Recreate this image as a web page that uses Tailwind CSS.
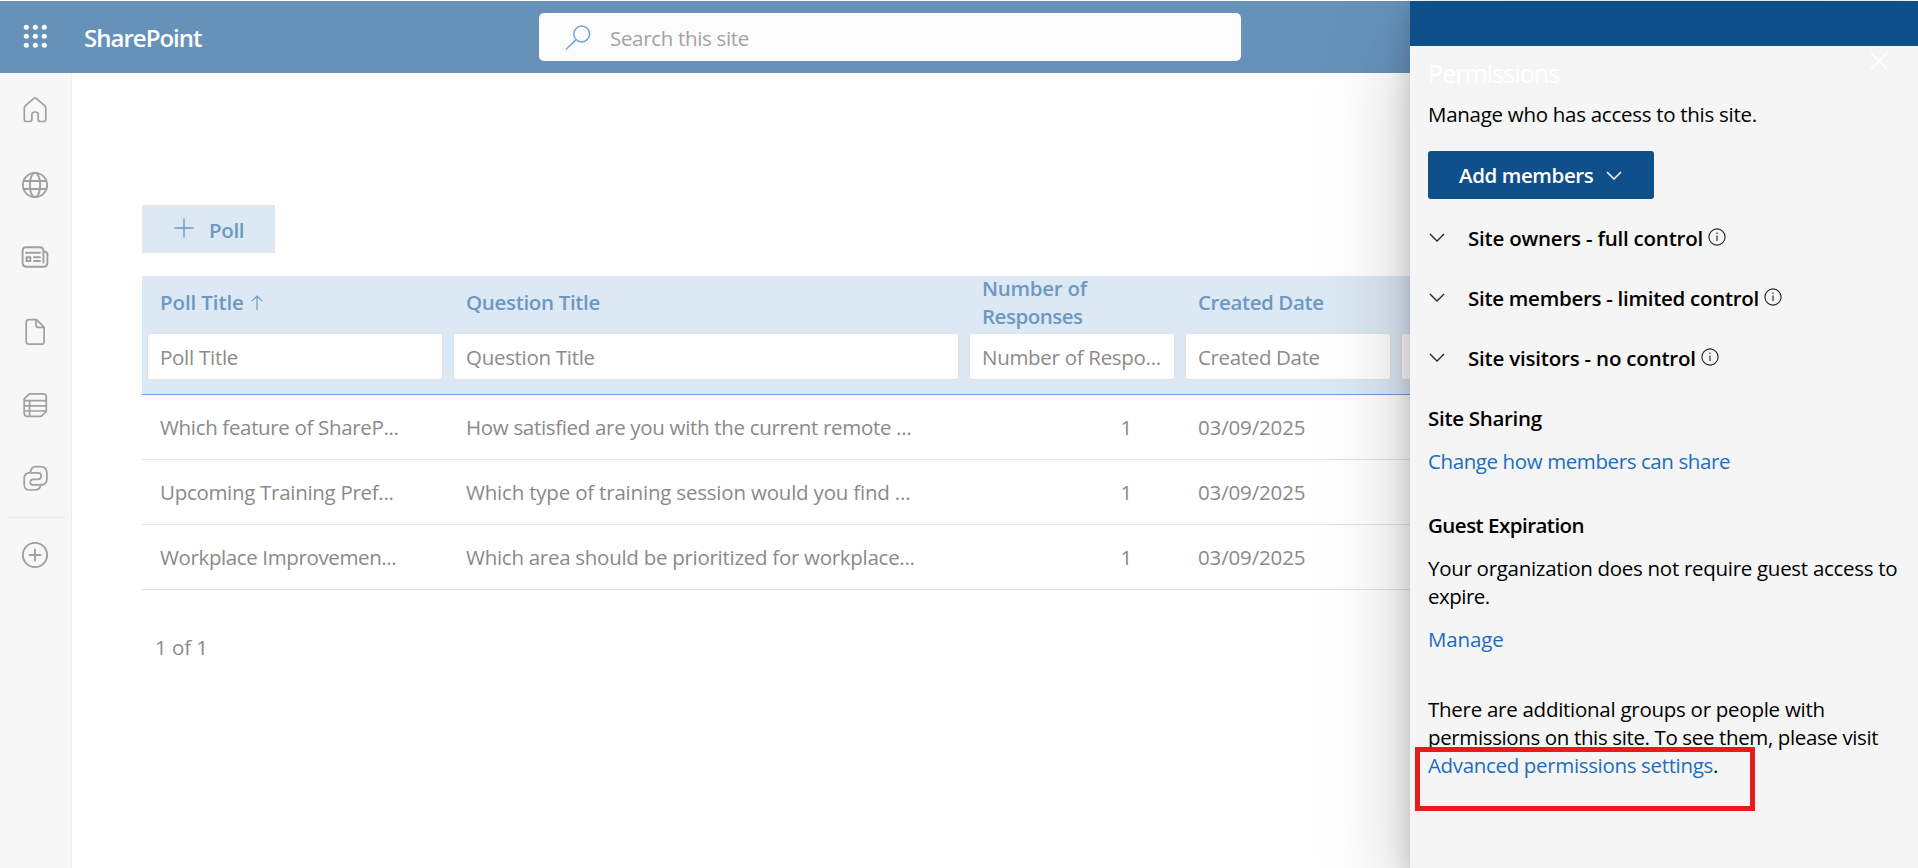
<!DOCTYPE html>
<html lang="en">
<head>
<meta charset="utf-8">
<title>SharePoint - Permissions</title>
<script src="https://cdn.jsdelivr.net/npm/@tailwindcss/browser@4"></script>
</head>
<body class="relative flex h-[868px] w-[1918px] flex-col overflow-hidden bg-white pt-px font-['Open_Sans','Noto_Sans',sans-serif] text-[20.5px] leading-[28px] tracking-[-0.27px] text-[#8a8a8a]">

  <!-- Suite header -->
  <header class="flex h-[72px] shrink-0 items-center bg-[#6692ba]">
    <button class="ml-[23px] block">
      <svg class="block size-6 -translate-y-px fill-white" viewBox="0 0 24 24">
        <circle cx="3.3" cy="3.3" r="2.5"/><circle cx="12.3" cy="3.3" r="2.5"/><circle cx="21.3" cy="3.3" r="2.5"/>
        <circle cx="3.3" cy="12.3" r="2.5"/><circle cx="12.3" cy="12.3" r="2.5"/><circle cx="21.3" cy="12.3" r="2.5"/>
        <circle cx="3.3" cy="21.3" r="2.5"/><circle cx="12.3" cy="21.3" r="2.5"/><circle cx="21.3" cy="21.3" r="2.5"/>
      </svg>
    </button>
    <div class="ml-[37px] w-[455px] pt-[2px] text-[24px] font-semibold tracking-[-0.98px] text-white">SharePoint</div>
    <div class="flex h-12 w-[702px] items-center rounded-[5px] bg-[#fcfcfc] text-[#a3a3a3]">
      <svg class="ml-[26px] block size-[26px] fill-none stroke-[#6fa5d8]" stroke-width="1.5" viewBox="0 0 26 26"><circle cx="16.7" cy="10" r="7.9"/><path d="M11 15.6 1 25.5"/></svg>
      <span class="ml-[19px] pt-[2px] tracking-[-0.32px]">Search this site</span>
    </div>
  </header>

  <div class="flex min-h-0 flex-1">
    <!-- App bar -->
    <nav class="flex w-[72px] shrink-0 flex-col items-center border-r border-[#efefef] bg-[#f7f7f7] pt-[23px] pr-[1px]">
      <svg class="size-7 shrink-0 fill-none stroke-[#a0a09e]" stroke-width="1.7" stroke-linejoin="round" viewBox="0 0 28 28"><path d="M12.8 2.4 Q14 1.5 15.2 2.4 L23.6 9.6 Q24.8 10.7 24.8 12.3 V22.9 Q24.8 25.5 22.6 25.5 H19.4 Q17.2 25.5 17.2 23.2 V18.2 Q17.2 16 14 16 Q10.9 16 10.9 18.2 V23.2 Q10.9 25.5 8.7 25.5 H5.5 Q3.3 25.5 3.3 22.9 V12.3 Q3.3 10.7 4.5 9.6 Z"/></svg>
      <svg class="mt-[47px] size-7 shrink-0 fill-none stroke-[#a0a09e]" stroke-width="1.9" viewBox="0 0 28 28"><circle cx="14" cy="14" r="12.1"/><ellipse cx="14" cy="14" rx="5.2" ry="12.1"/><path d="M2.4 10H25.6M2.4 18H25.6"/></svg>
      <svg class="mt-[44px] size-7 shrink-0 fill-none stroke-[#a0a09e]" stroke-width="1.9" stroke-linejoin="round" viewBox="0 0 28 28"><path d="M22.4 19.6V7.8Q22.4 4.2 18.8 4.2H5.2Q1.6 4.2 1.6 7.8V19.8Q1.6 23.8 5.6 23.8H22.4Q26.4 23.8 26.4 19.8V11Q26.4 8.4 22.6 8.4M5 9.8H19M13 14.2H19M13 18H19" stroke-linecap="round"/><path d="M5.6 14.2H9.4V18H5.6Z"/></svg>
      <svg class="mt-[47px] size-7 shrink-0 fill-none stroke-[#a0a09e]" stroke-width="1.7" stroke-linejoin="round" viewBox="0 0 28 28"><path d="M8 1.7H15.6L23.1 9.1V23.4Q23.1 26.2 20.3 26.2H8Q5.2 26.2 5.2 23.4V4.5Q5.2 1.7 8 1.7ZM15 1.7V7.2Q15 9.4 17.2 9.4H23"/></svg>
      <svg class="mt-[45px] size-7 shrink-0 fill-none stroke-[#a0a09e]" stroke-width="1.7" stroke-linejoin="round" viewBox="0 0 28 28"><path d="M8.3 2.8H22Q25.3 2.8 25.3 6V20.5L20.2 25.4H6Q3.2 25.4 3.2 22.6V7.8ZM3.2 9.6H25.3M3.2 14.8H25.3M3.2 20H25.3M8.6 9.6V25.4"/></svg>
      <svg class="mt-[45px] size-7 shrink-0 fill-none stroke-[#a0a09e]" stroke-width="1.7" stroke-linejoin="round" stroke-linecap="round" viewBox="0 0 28 28"><path d="M9.4 8.6Q9.8 2.6 15.2 2.6H19.4Q25.9 2.6 25.9 9.1V14.4Q25.9 20.9 19.4 20.9H11.6Q9.2 20.9 9.2 18.1Q9.2 15.3 12 15.3H17Q20.2 15.3 20.2 12Q20.2 8.8 17 8.8H8.6Q3.2 8.8 3.2 14.4V20.4Q3.2 26 8.8 26H13.6Q19 26 19.6 21.2"/></svg>
      <div class="mt-[25px] ml-px h-px w-[59px] shrink-0 bg-[#ececec]"></div>
      <svg class="mt-[23px] size-7 shrink-0 fill-none stroke-[#a0a09e]" stroke-width="1.9" stroke-linecap="round" viewBox="0 0 28 28"><circle cx="14" cy="14" r="12.1"/><path d="M14 8.4V19.6M8.4 14H19.6"/></svg>
    </nav>

    <!-- Poll list -->
    <main class="flex w-[1500px] shrink-0 flex-col items-start pt-[132px] pl-[70px]">
      <button class="flex h-12 w-[133px] items-center border border-[#e5e7e9] bg-[#dce8f4] font-semibold text-[#6c98c2]">
        <svg class="ml-[31px] size-5 -translate-y-px stroke-[#6c98c2]" stroke-width="1.4" viewBox="0 0 20 20"><path d="M10 .5V19.5M.5 10H19.5"/></svg>
        <span class="ml-[15px] pt-[2px] tracking-[-0.35px]">Poll</span>
      </button>

      <div class="mt-[23px] w-full">
        <div class="h-[119px] border-b border-[#68a0d6] bg-[#dce8f4]">
          <div class="grid h-[52px] grid-cols-[306px_516px_216px_216px_176px] grid-rows-[52px] items-center font-semibold text-[#6c98c2]">
            <div class="flex items-center pl-[18px]"><span class="tracking-[-0.1px]">Poll Title</span>
              <svg class="ml-[7px] h-[15px] w-3 fill-none stroke-[#6c98c2]" stroke-width="1.2" viewBox="0 0 12 15"><path d="M6 15V1M.8 6.2 6 1 11.2 6.2"/></svg></div>
            <div class="pl-[18px] tracking-[-0.33px]">Question Title</div>
            <div class="pl-[18px]">Number of<br><span class="tracking-[-0.5px]">Responses</span></div>
            <div class="pl-[18px] tracking-[-0.4px]">Created Date</div>
            <div></div>
          </div>
          <div class="mt-[5px] grid grid-cols-[306px_516px_216px_216px_176px] text-[#8c8b8a]">
            <div class="px-[5px]"><div class="flex h-[47px] items-center rounded-[3px] border border-[#e2e2e2] bg-white pl-[12px]">Poll Title</div></div>
            <div class="px-[5px]"><div class="flex h-[47px] items-center rounded-[3px] border border-[#e2e2e2] bg-white pl-[12px] tracking-[-0.3px]">Question Title</div></div>
            <div class="px-[5px]"><div class="flex h-[47px] items-center rounded-[3px] border border-[#e2e2e2] bg-white pl-[12px] tracking-[-0.3px]">Number of Respo...</div></div>
            <div class="px-[5px]"><div class="flex h-[47px] items-center rounded-[3px] border border-[#e2e2e2] bg-white pl-[12px] tracking-[-0.35px]">Created Date</div></div>
            <div class="px-[5px]"><div class="h-[47px] rounded-[3px] border border-[#e2e2e2] bg-white"></div></div>
          </div>
        </div>

        <div class="grid h-[65px] grid-cols-[306px_516px_216px_216px] items-center border-b border-[#e2e2e2]">
          <div class="pl-[18px] tracking-[-0.34px]">Which feature of ShareP...</div><div class="pl-[18px] tracking-[-0.32px]">How satisfied are you with the current remote ...</div>
          <div class="pr-[48px] text-right">1</div><div class="pl-[18px] tracking-[-0.15px]">03/09/2025</div>
        </div>
        <div class="grid h-[65px] grid-cols-[306px_516px_216px_216px] items-center border-b border-[#e2e2e2]">
          <div class="pl-[18px] tracking-[-0.3px]">Upcoming Training Pref...</div><div class="pl-[18px] tracking-[-0.2px]">Which type of training session would you find ...</div>
          <div class="pr-[48px] text-right">1</div><div class="pl-[18px] tracking-[-0.15px]">03/09/2025</div>
        </div>
        <div class="grid h-[65px] grid-cols-[306px_516px_216px_216px] items-center border-b border-[#e2e2e2]">
          <div class="pl-[18px] tracking-[-0.38px]">Workplace Improvemen...</div><div class="pl-[18px] tracking-[-0.28px]">Which area should be prioritized for workplace...</div>
          <div class="pr-[48px] text-right">1</div><div class="pl-[18px] tracking-[-0.15px]">03/09/2025</div>
        </div>
      </div>
      <div class="mt-[43px] pl-[13px] tracking-[-0.05px]">1 of 1</div>
    </main>
  </div>

  <!-- Permissions panel -->
  <aside class="absolute top-px right-0 flex h-[867px] w-[508px] flex-col bg-[#f5f5f5] text-black shadow-[0_38px_86px_rgba(0,0,0,0.22),0_7px_22px_rgba(0,0,0,0.18)]">
    <div class="h-[45px] shrink-0 bg-[#0f4f8a]"></div>
    <div class="flex flex-col items-start pl-[18px]">
      <div class="flex w-full items-start justify-between pt-[5px] pr-[30px] text-white">
        <h2 class="mt-[8px] text-[25px] tracking-[-0.9px]">Permissions</h2>
        <svg class="mt-px size-[18px] stroke-white" stroke-width="1.7" viewBox="0 0 18 18"><path d="M.8.8 17.2 17.2M17.2.8.8 17.2"/></svg>
      </div>
      <p class="mt-[13px] tracking-[-0.28px]">Manage who has access to this site.</p>
      <button class="mt-[23px] flex h-12 w-[226px] items-center rounded-[3px] bg-[#0f4f8a] pl-[31px] font-semibold text-white">
        <span class="tracking-[-0.4px]">Add members</span>
        <svg class="ml-[13px] h-[9px] w-4 fill-none stroke-white" stroke-width="1.5" viewBox="0 0 16 9"><path d="M1 1 8 8 15 1"/></svg>
      </button>

      <div class="mt-[25px] flex flex-col gap-8 font-semibold">
        <div class="flex h-7 items-center">
          <svg class="mb-[1px] ml-[1px] h-[9px] w-4 fill-none stroke-[#222]" stroke-width="1.3" viewBox="0 0 16 9"><path d="M1 1 8 8 15 1"/></svg>
          <span class="ml-[23px] tracking-[-0.21px]">Site owners - full control</span>
          <svg class="mb-[3px] ml-[5px] size-[18px] fill-none stroke-[#222]" stroke-width="1.1" viewBox="0 0 18 18"><circle cx="9" cy="9" r="8.1"/><path d="M9 7.5V13M9 4.5V6"/></svg>
        </div>
        <div class="flex h-7 items-center">
          <svg class="mb-[1px] ml-[1px] h-[9px] w-4 fill-none stroke-[#222]" stroke-width="1.3" viewBox="0 0 16 9"><path d="M1 1 8 8 15 1"/></svg>
          <span class="ml-[23px] tracking-[-0.28px]">Site members - limited control</span>
          <svg class="mb-[3px] ml-[5px] size-[18px] fill-none stroke-[#222]" stroke-width="1.1" viewBox="0 0 18 18"><circle cx="9" cy="9" r="8.1"/><path d="M9 7.5V13M9 4.5V6"/></svg>
        </div>
        <div class="flex h-7 items-center">
          <svg class="mb-[1px] ml-[1px] h-[9px] w-4 fill-none stroke-[#222]" stroke-width="1.3" viewBox="0 0 16 9"><path d="M1 1 8 8 15 1"/></svg>
          <span class="ml-[23px] tracking-[-0.2px]">Site visitors - no control</span>
          <svg class="mb-[3px] ml-[5px] size-[18px] fill-none stroke-[#222]" stroke-width="1.1" viewBox="0 0 18 18"><circle cx="9" cy="9" r="8.1"/><path d="M9 7.5V13M9 4.5V6"/></svg>
        </div>
      </div>

      <h3 class="mt-8 font-semibold tracking-[-0.3px]">Site Sharing</h3>
      <a class="mt-[15px] tracking-[-0.4px] text-[#1b6ebe]">Change how members can share</a>
      <h3 class="mt-[36px] font-semibold tracking-[-0.52px]">Guest Expiration</h3>
      <p class="mt-[15px] tracking-[-0.29px]">Your organization does not require guest access to<br><span class="tracking-[-0.5px]">expire.</span></p>
      <a class="mt-[15px] tracking-[-0.15px] text-[#1b6ebe]">Manage</a>
      <p class="mt-[42px] whitespace-nowrap tracking-[-0.27px]">There are additional groups or people with<br><span class="tracking-[-0.37px]">permissions on this site. To see them, please visit</span><br><a class="tracking-[-0.34px] text-[#1b6ebe]">Advanced permissions settings</a>.</p>
    </div>
    <!-- Highlight around the advanced settings link -->
    <div class="absolute top-[746px] left-[5px] h-[64px] w-[340px] border-[5px] border-[#e81a1c]"></div>
  </aside>
</body>
</html>
